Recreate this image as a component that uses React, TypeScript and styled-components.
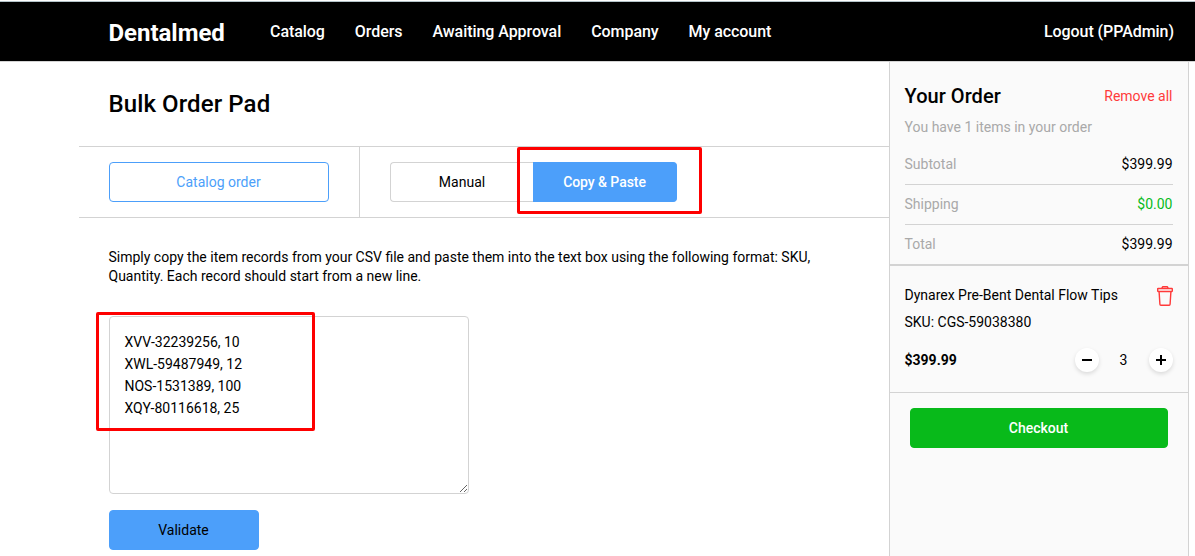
import React from "react";
import styled, { createGlobalStyle } from "styled-components";

const GlobalStyle = createGlobalStyle`
  *, *::before, *::after { box-sizing: border-box; }
  body {
    margin: 0;
    background: #fff;
    color: #000;
    font-family: Roboto, "Liberation Sans", sans-serif;
    font-size: 14px;
    line-height: 20px;
    overflow: hidden;
  }
  button, textarea { font: inherit; color: inherit; }
`;

const Page = styled.div`
  display: flex;
  flex-direction: column;
  height: 556px;
  padding-top: 1px;
  overflow: hidden;
`;

const Header = styled.header`
  display: flex;
  flex: none;
  align-items: center;
  height: 61px;
  padding: 0 21px 0 108.5px;
  background: #000;
  border-top: 1px solid #b4c3c9;
  border-bottom: 1px solid #d3d3d3;
  color: #fff;
`;

const Brand = styled.div`
  width: 161.5px;
  padding-top: 2px;
  font-size: 24px;
  line-height: 30px;
  font-weight: 700;
  letter-spacing: -0.03px;
`;

const Nav = styled.nav`
  display: flex;
  flex: 1;
  gap: 30px;
`;

const NavLink = styled.a`
  font-size: 16px;
  line-height: 20px;
  font-weight: 500;
  letter-spacing: -0.06px;
  white-space: nowrap;
`;

const Body = styled.div`
  display: flex;
  flex: 1;
  min-height: 0;
  padding-left: 79px;
`;

const Main = styled.main`
  width: 810px;
`;

const Title = styled.h1`
  margin: 0;
  padding: 27px 29.5px;
  height: 84px;
  font-size: 24px;
  line-height: 30px;
  font-weight: 500;
  letter-spacing: 0.1px;
`;

const Toolbar = styled.div`
  display: flex;
  height: 72px;
  border-top: 1px solid #d3d3d3;
  border-bottom: 1px solid #d3d3d3;
`;

const ToolbarCell = styled.div<{ $divided?: boolean }>`
  display: flex;
  position: relative;
  padding: 15px 30px;
  border-right: ${(p) => (p.$divided ? "1px solid #d3d3d3" : "0")};
`;

const Button = styled.button<{
  $width: number;
  $tone: "outline" | "primary" | "success";
}>`
  display: block;
  width: ${(p) => p.$width}px;
  height: 40px;
  padding: 0 1px 0 0;
  border-radius: 4px;
  border: 1px solid ${(p) => (p.$tone === "success" ? "#08ba1a" : "#4c9ffa")};
  background: ${(p) =>
    p.$tone === "outline" ? "#fff" : p.$tone === "success" ? "#08ba1a" : "#4c9ffa"};
  color: ${(p) =>
    p.$tone === "outline" ? "#4c9ffa" : p.$tone === "success" ? "#fff" : "#000"};
  font-weight: ${(p) => (p.$tone === "success" ? 500 : 400)};
`;

const Tab = styled.button<{ $active?: boolean }>`
  width: ${(p) => (p.$active ? 144 : 143)}px;
  height: 40px;
  padding: 0;
  border: 1px solid ${(p) => (p.$active ? "#4c9ffa" : "#d3d3d3")};
  ${(p) => (p.$active ? "border-left: 0;" : "border-right: 0;")}
  border-radius: ${(p) => (p.$active ? "0 4px 4px 0" : "4px 0 0 4px")};
  background: ${(p) => (p.$active ? "#4c9ffa" : "#fff")};
  color: ${(p) => (p.$active ? "#fff" : "#000")};
  font-weight: ${(p) => (p.$active ? 500 : 400)};
  letter-spacing: ${(p) => (p.$active ? "-0.06px" : "0")};
`;

const Highlight = styled.div<{ $x: number; $y: number; $w: number; $h: number }>`
  position: absolute;
  left: ${(p) => p.$x}px;
  top: ${(p) => p.$y}px;
  width: ${(p) => p.$w}px;
  height: ${(p) => p.$h}px;
  border: 3px solid #fe0000;
  border-radius: 2px;
  pointer-events: none;
`;

const Content = styled.section`
  padding: 30px;
`;

const Hint = styled.p`
  margin: 0 0 30px -0.5px;
  line-height: 19px;
`;

const Field = styled.div`
  position: relative;
  width: 360px;
  height: 178px;
  margin-bottom: 16px;
`;

const Records = styled.textarea`
  display: block;
  width: 360px;
  height: 178px;
  padding: 14px 14.5px;
  border: 1px solid #d3d3d3;
  border-radius: 4px;
  background: #fff;
  line-height: 22px;
  outline: none;
`;

const Sidebar = styled.aside`
  width: 300px;
  border: solid #d3d3d3;
  border-width: 0 1px;
  background: #fafafa;
`;

const Summary = styled.div`
  height: 204px;
  padding: 20px 15px 0;
  border-bottom: 2px solid #d3d3d3;
`;

const SummaryHead = styled.div`
  display: flex;
  justify-content: space-between;
  align-items: center;
  height: 28px;
`;

const SummaryTitle = styled.h2`
  margin: 0 0 0 -0.5px;
  font-size: 20px;
  line-height: 28px;
  font-weight: 500;
  letter-spacing: 0.05px;
`;

const RemoveAll = styled.a`
  color: #ff3a3a;
  padding-right: 0.5px;
`;

const Muted = styled.div`
  margin-left: -0.5px;
  padding: 7px 0 8px;
  color: #a9a9a9;
`;

const TotalRow = styled.div<{ $last?: boolean }>`
  display: flex;
  justify-content: space-between;
  height: 40px;
  padding-top: 9px;
  border-bottom: ${(p) => (p.$last ? "0" : "1px solid #d3d3d3")};
`;

const Label = styled.span`
  margin-left: -0.5px;
  color: #a9a9a9;
`;

const Amount = styled.span<{ $free?: boolean }>`
  margin-right: 0.5px;
  color: ${(p) => (p.$free ? "#08ba1a" : "#000")};
`;

const Item = styled.div`
  height: 127px;
  padding: 19px 15px 0;
  border-bottom: 1px solid #d3d3d3;
`;

const ItemRow = styled.div<{ $height: number }>`
  display: flex;
  justify-content: space-between;
  align-items: center;
  height: ${(p) => p.$height}px;
`;

const ItemText = styled.span<{ $bold?: boolean }>`
  margin-left: -0.5px;
  padding-bottom: 2px;
  font-weight: ${(p) => (p.$bold ? 700 : 400)};
`;

const Stepper = styled.div`
  display: flex;
  align-items: center;
  width: 98px;
  justify-content: space-between;
`;

const Quantity = styled.span`
  padding: 0 1px 1px 0;
`;

const Round = styled.button`
  display: flex;
  width: 24px;
  height: 24px;
  margin-bottom: 1px;
  padding: 0;
  border: 0;
  border-radius: 50%;
  background: #fff;
  box-shadow: 0 2px 4px rgba(0, 0, 0, 0.13);
`;

const CheckoutBar = styled.div`
  padding: 15px 20px;
`;

const TrashIcon = () => (
  <svg width="16" height="20" viewBox="0 0 16 20" fill="none" stroke="#ff3a3a" strokeWidth="1.4">
    <path d="M4.9 2.4 5.6 .8H10.4L11.1 2.4" strokeLinejoin="round" />
    <rect x=".7" y="2.5" width="14.6" height="3" rx=".4" />
    <path d="M2.1 5.6 2.9 18.3Q3 19.3 3.8 19.3H12.2Q13 19.3 13.1 18.3L13.9 5.6" />
  </svg>
);

const SignIcon = ({ plus }: { plus?: boolean }) => (
  <svg width="24" height="24" viewBox="0 0 24 24" fill="#000">
    <rect x="7" y="11" width="10" height="2" />
    {plus && <rect x="11" y="7" width="2" height="10" />}
  </svg>
);

const links = ["Catalog", "Orders", "Awaiting Approval", "Company", "My account"];
const records = "XVV-32239256, 10\nXWL-59487949, 12\nNOS-1531389, 100\nXQY-80116618, 25";

export default function App() {
  return (
    <Page>
      <GlobalStyle />
      <Header>
        <Brand>Dentalmed</Brand>
        <Nav>
          {links.map((l) => (
            <NavLink key={l}>{l}</NavLink>
          ))}
        </Nav>
        <NavLink>Logout (PPAdmin)</NavLink>
      </Header>
      <Body>
        <Main>
          <Title>Bulk Order Pad</Title>
          <Toolbar>
            <ToolbarCell $divided>
              <Button $width={220} $tone="outline">Catalog order</Button>
            </ToolbarCell>
            <ToolbarCell>
              <Tab>Manual</Tab>
              <Tab $active>Copy &amp; Paste</Tab>
              <Highlight $x={157} $y={0} $w={185} $h={67} />
            </ToolbarCell>
          </Toolbar>
          <Content>
            <Hint>
              Simply copy the item records from your CSV file and paste them into the text box
              using the following format: SKU,
              <br />
              Quantity. Each record should start from a new line.
            </Hint>
            <Field>
              <Records defaultValue={records} spellCheck={false} />
              <Highlight $x={-13} $y={-4} $w={219} $h={119} />
            </Field>
            <Button $width={150} $tone="primary">Validate</Button>
          </Content>
        </Main>
        <Sidebar>
          <Summary>
            <SummaryHead>
              <SummaryTitle>Your Order</SummaryTitle>
              <RemoveAll>Remove all</RemoveAll>
            </SummaryHead>
            <Muted>You have 1 items in your order</Muted>
            <TotalRow>
              <Label>Subtotal</Label>
              <Amount>$399.99</Amount>
            </TotalRow>
            <TotalRow>
              <Label>Shipping</Label>
              <Amount $free>$0.00</Amount>
            </TotalRow>
            <TotalRow $last>
              <Label>Total</Label>
              <Amount>$399.99</Amount>
            </TotalRow>
          </Summary>
          <Item>
            <ItemRow $height={22}>
              <ItemText>Dynarex Pre-Bent Dental Flow Tips</ItemText>
              <TrashIcon />
            </ItemRow>
            <ItemRow $height={32}>
              <ItemText>SKU: CGS-59038380</ItemText>
            </ItemRow>
            <ItemRow $height={43}>
              <ItemText $bold>$399.99</ItemText>
              <Stepper>
                <Round aria-label="Decrease"><SignIcon /></Round>
                <Quantity>3</Quantity>
                <Round aria-label="Increase"><SignIcon plus /></Round>
              </Stepper>
            </ItemRow>
          </Item>
          <CheckoutBar>
            <Button $width={258} $tone="success">Checkout</Button>
          </CheckoutBar>
        </Sidebar>
      </Body>
    </Page>
  );
}
